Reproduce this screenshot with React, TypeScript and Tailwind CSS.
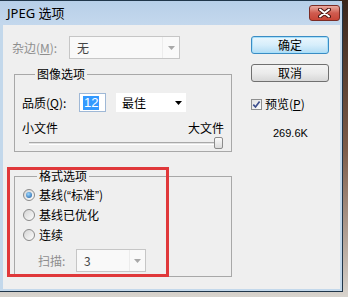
import React from 'react';

function Arrow({ color }: { color: string }) {
  return (
    <svg width="7" height="4" viewBox="0 0 7 4">
      <path d="M0 0 H7 L3.5 4 Z" fill={color} />
    </svg>
  );
}

function Radio({ checked }: { checked?: boolean }) {
  return (
    <span className="w-[12px] h-[12px] rounded-full border border-[#8a8a8a] bg-gradient-to-br from-[#d4d4d4] to-[#fdfdfd] flex items-center justify-center shrink-0">
      {checked && (
        <span className="w-[6px] h-[6px] rounded-full bg-[radial-gradient(circle_at_40%_35%,#9ad6ff,#1a5aa0)]" />
      )}
    </span>
  );
}

function DisabledCombo({ value, width, split }: { value: string; width: string; split: string }) {
  return (
    <div className={`${width} h-[23px] flex items-center border border-[#c6c6c6] bg-[#f9f9f9]`}>
      <span className={`${split} pl-[7px] text-[#444]`}>{value}</span>
      <span className="flex-1 h-full flex items-center justify-center border-l border-[#ececec]">
        <Arrow color="#a8a8a8" />
      </span>
    </div>
  );
}

export default function App() {
  return (
    <div className="w-[348px] h-[297px] overflow-hidden bg-gradient-to-b from-[#3a261c] via-[#7d5c49] to-[#d8d4ce] font-['Noto_Sans_CJK_SC',sans-serif] text-[12px] leading-[14px] text-black">
      <div className="w-[343px] h-[292px] flex flex-col border-t border-r border-b border-[#20364a] rounded-tr-[6px] bg-[#c3d8eb]">
        {/* title bar */}
        <div className="h-[24px] flex items-center justify-between pl-[7px] pr-[2px] bg-gradient-to-b from-[#b7cfe8] to-[#c4d8ed]">
          <span className="text-[13px] leading-[16px] font-['Noto_Sans','Noto_Sans_CJK_SC',sans-serif]">JPEG 选项</span>
          <div className="w-[31px] h-[16px] -mt-[1px] rounded-[3px] border border-[#7b2c25] bg-gradient-to-b from-[#e9aaa0] via-[#cf5b4f] to-[#c84536] flex items-center justify-center">
            <svg width="13" height="10" viewBox="0 0 13 10">
              <path d="M2 1.5 L11 8.5 M11 1.5 L2 8.5" stroke="#4a1410" strokeWidth="4" strokeLinecap="round" />
              <path d="M2 1.5 L11 8.5 M11 1.5 L2 8.5" stroke="#ffffff" strokeWidth="2" strokeLinecap="round" />
            </svg>
          </div>
        </div>

        {/* body */}
        <div className="flex-1 ml-[3px] mr-[2px] mb-[2px] bg-[#efefef] relative flex pt-[11px]">
          {/* left column */}
          <div className="w-[229px] flex flex-col">
            <div className="flex items-center h-[23px] pl-[9px]">
              <span className="w-[57px] text-[#8e8e8e]">
                杂边(<span className="underline">M</span>):
              </span>
              <DisabledCombo value="无" width="w-[111px]" split="w-[92px]" />
            </div>

            <fieldset className="ml-[11px] mt-[8px] w-[218px] border border-[#a8a8a8] pl-[7px] pr-[7px] pt-[12px] pb-[2px]">
              <legend className="ml-[13px] px-[2px] leading-[14px]">图像选项</legend>
              <div className="flex items-center h-[19px]">
                <span className="w-[57px]">
                  品质(<span className="underline">Q</span>):
                </span>
                <div className="w-[27px] h-[19px] border border-[#9fb8d6] bg-white flex items-center pl-[3px]">
                  <span className="bg-[#3399ff] text-white px-[1px] h-[14px] leading-[14px] text-[13px] font-['Liberation_Sans',sans-serif]">12</span>
                </div>
                <div className="ml-[10px] w-[70px] h-[19px] bg-white flex items-center justify-between pl-[6px] pr-[4px]">
                  <span>最佳</span>
                  <Arrow color="#000" />
                </div>
              </div>
              <div className="mt-[9px] flex justify-between h-[14px]">
                <span>小文件</span>
                <span>大文件</span>
              </div>
              <div className="mt-[2px] h-[12px] relative flex items-center pl-[7px] pr-[4px]">
                <div className="flex-1 h-[3px] border-t border-[#a9a9a9] border-b border-b-white bg-[#e3e3e3]" />
                <div className="absolute left-[192px] top-0 w-[9px] h-[12px] rounded-[2px] border border-[#8c8c8c] bg-gradient-to-b from-[#fbfbfb] to-[#dcdcdc]" />
              </div>
            </fieldset>

            <fieldset className="ml-[11px] mt-[17px] w-[218px] border border-[#a8a8a8] pl-[8px] pt-[2px] pb-[4px]">
              <legend className="ml-[14px] px-[2px] leading-[14px]">格式选项</legend>
              <div className="flex items-center h-[20px] gap-[4px]">
                <Radio checked />
                <span>
                  基线(<span className="font-['Liberation_Sans',sans-serif]">“</span>标准<span className="font-['Liberation_Sans',sans-serif]">”</span>)
                </span>
              </div>
              <div className="flex items-center h-[20px] gap-[4px]">
                <Radio />
                <span>基线已优化</span>
              </div>
              <div className="flex items-center h-[20px] gap-[4px]">
                <Radio />
                <span>连续</span>
              </div>
              <div className="mt-[4px] flex items-center h-[23px] pl-[15px]">
                <span className="w-[38px] text-[#8e8e8e]">扫描:</span>
                <DisabledCombo value="3" width="w-[70px]" split="w-[52px]" />
              </div>
            </fieldset>
          </div>

          {/* right column */}
          <div className="ml-[19px] w-[78px] flex flex-col">
            <button className="h-[18px] rounded-[3px] border border-[#3a8cc4] bg-gradient-to-b from-[#eaf6fd] via-[#d6eefb] to-[#b2dcf4] shadow-[inset_0_0_0_1px_#a8e0fa] leading-[14px]">
              确定
            </button>
            <button className="mt-[10px] h-[18px] rounded-[3px] border border-[#707070] bg-gradient-to-b from-[#f4f4f4] via-[#ebebeb] to-[#d8d8d8] leading-[14px]">
              取消
            </button>
            <div className="mt-[16px] flex items-center h-[12px]">
              <span className="w-[11px] h-[11px] border border-[#8e8f8f] bg-gradient-to-br from-[#e2e2e2] to-[#fcfcfc] flex items-center justify-center">
                <svg width="9" height="9" viewBox="0 0 9 9">
                  <path d="M1.3 4.6 L3.5 7 L7.6 1.4" stroke="#3d4f8e" strokeWidth="1.7" fill="none" />
                </svg>
              </span>
              <span className="ml-[3px]">
                预览(<span className="underline">P</span>)
              </span>
            </div>
            <div className="mt-[17px] pl-[22px] text-[11px] leading-[13px] font-['Liberation_Sans',sans-serif]">269.6K</div>
          </div>

          {/* red annotation box */}
          <div className="absolute left-[4px] top-[142px] w-[162px] h-[110px] border-[3px] border-[#e0383a]" />
        </div>
      </div>
    </div>
  );
}
